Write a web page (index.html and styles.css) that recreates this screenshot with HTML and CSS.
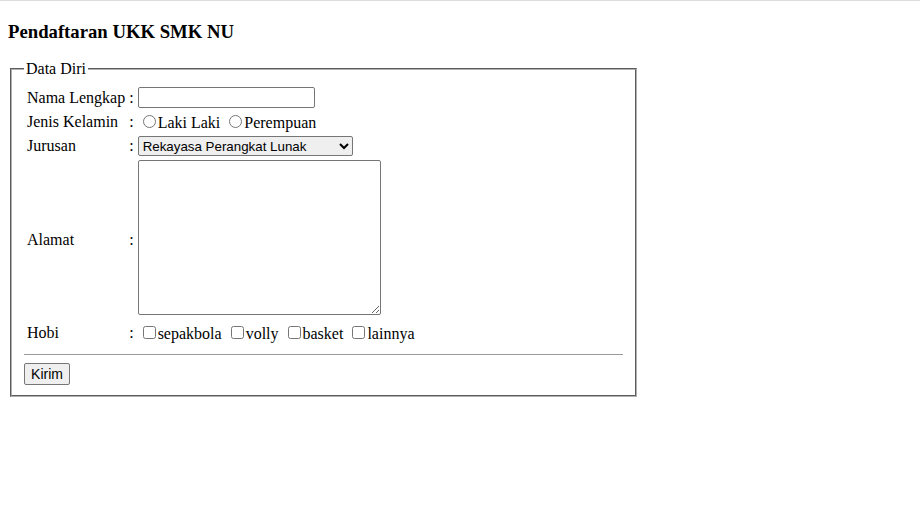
FILE: index.html
```html
<!DOCTYPE html>
<html>
<head>
<meta charset="utf-8">
<title>Pendaftaran UKK SMK NU</title>
<link rel="stylesheet" href="styles.css">
</head>
<body>
<h3 class="title">Pendaftaran UKK SMK NU</h3>
<form class="form">
  <fieldset class="box">
    <legend class="legend">Data Diri</legend>
    <table class="grid">
      <tr>
        <td>Nama Lengkap</td>
        <td>:</td>
        <td><input class="text" type="text"></td>
      </tr>
      <tr>
        <td>Jenis Kelamin</td>
        <td>:</td>
        <td><input type="radio" name="jk" class="choice">Laki Laki <input type="radio" name="jk" class="choice">Perempuan</td>
      </tr>
      <tr>
        <td>Jurusan</td>
        <td>:</td>
        <td><select class="pick"><option>Rekayasa Perangkat Lunak</option><option>Teknik Komputer Jaringan</option></select></td>
      </tr>
      <tr>
        <td>Alamat</td>
        <td>:</td>
        <td><textarea class="area"></textarea></td>
      </tr>
      <tr>
        <td>Hobi</td>
        <td>:</td>
        <td><input type="checkbox" class="choice">sepakbola <input type="checkbox" class="choice">volly <input type="checkbox" class="choice">basket <input type="checkbox" class="choice">lainnya</td>
      </tr>
    </table>
    <hr class="rule">
    <button type="button" class="btn">Kirim</button>
  </fieldset>
</form>
</body>
</html>
```
FILE: styles.css
```css
html {
  border-top: 1px solid #dcdcdc;
}
body {
  margin: 8px;
  font-family: "Liberation Serif", "Times New Roman", serif;
  font-size: 16px;
  color: #000;
  background: #fff;
}
.title {
  font-size: 18.72px;
  font-weight: bold;
  margin: 12px 0 17px;
}
.form {
  margin: 0;
}
.box {
  width: 599px;
  margin: 0 2px;
  padding: 0 12px 10px;
  border: 2px groove #b0b0b0;
}
.legend {
  padding: 0 2px;
}
.grid {
  border-spacing: 2px;
  margin-top: 6px;
}
.grid td {
  padding: 1px;
  vertical-align: middle;
}
.text {
  width: 177px;
  height: 21px;
  box-sizing: border-box;
  border: 1px solid #767676;
  border-radius: 2px;
  margin: 0;
  font-size: 13.33px;
}
.choice {
  margin: 3px 2px 0 5px;
  width: 13px;
  height: 13px;
}
.pick {
  width: 215px;
  height: 20px;
  box-sizing: border-box;
  font-family: Arial, "Liberation Sans", sans-serif;
  font-size: 13.33px;
  border: 1px solid #767676;
  border-radius: 2px;
  margin: 0;
}
.area {
  width: 243px;
  height: 155px;
  box-sizing: border-box;
  border: 1px solid #767676;
  border-radius: 2px;
  margin: 0;
}
.rule {
  margin: 8px 0 8px;
  border: 0;
  border-top: 1px solid #9a9a9a;
}
.btn {
  display: block;
  font-family: Arial, "Liberation Sans", sans-serif;
  font-size: 14px;
  padding: 1px 6px;
  height: 22px;
  width: 46px;
  border: 1px solid #767676;
  border-radius: 2px;
  background: #efefef;
}
```
